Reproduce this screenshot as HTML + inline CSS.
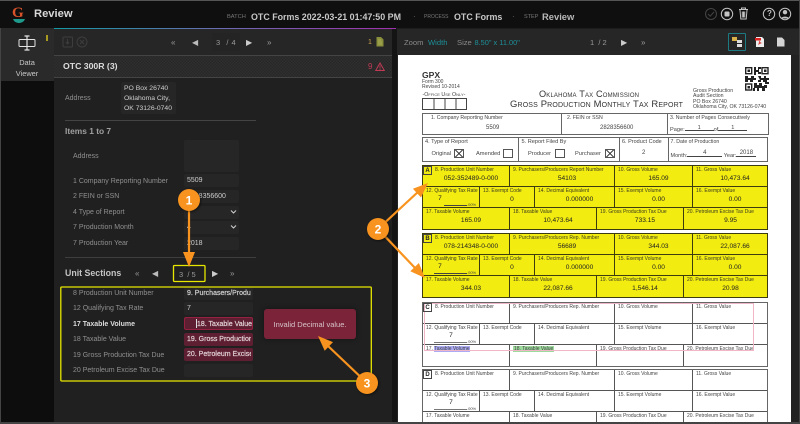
<!DOCTYPE html>
<html><head><meta charset="utf-8"><style>
*{box-sizing:border-box}
html,body{margin:0;padding:0;background:#1c1c1c}
#p{position:relative;width:800px;height:424px;overflow:hidden;background:#1c1c1c;font-family:"Liberation Sans",sans-serif;filter:blur(.3px)}
.a{position:absolute;white-space:nowrap}
.l{position:absolute;white-space:nowrap;font-size:7px;color:#8f8f8f;left:73px;line-height:10px;margin-top:1px}
.i{position:absolute;left:184px;width:55px;height:13px;background:#262626;border-radius:2px;color:#ccc;font-size:7px;line-height:14px;padding-left:3px;overflow:hidden;white-space:nowrap}
.u{width:69px}
.n{display:block;width:64px;overflow:hidden;font-size:7px;-webkit-text-stroke:.2px currentColor}
.e{background:#5e1f33;color:#e0d0d4}
.nav{position:absolute;color:#999;font-size:8px;line-height:10px;white-space:nowrap}
.s{position:absolute;left:422px;width:346px;border:1px solid #444;color:#222}
.y{background:#f2ec10;border-color:#3c3c10}
.r{display:flex;height:21px;border-bottom:.7px solid #555}
.y .r{border-color:#3c3c10}
.r:last-child{border-bottom:0}
.c{position:relative;border-right:.7px solid #555;font-size:5px;line-height:6px;color:#444;padding:1.500px 0 0 3px;white-space:nowrap;height:100%}
.y .c{border-color:#3c3c10;color:#3a3a20}
.c:last-child{border-right:0}
.c b{position:absolute;left:0;right:0;top:9px;text-align:center;font-weight:normal;font-size:6.600px;line-height:8px;color:#222;padding-left:10px}
.k{position:absolute;left:0;top:0;width:9px;height:9px;border:.7px solid #444;font-size:6px;font-weight:bold;line-height:8px;text-align:center;color:#222;background:transparent;z-index:2}
.q{position:absolute;font-size:5.200px;line-height:6px;color:#444;white-space:nowrap}
.t{position:absolute;border:.8px solid #555;width:9.500px;height:9.500px}
.x{background:linear-gradient(45deg,transparent 46%,#444 46%,#444 54%,transparent 54%),linear-gradient(-45deg,transparent 46%,#444 46%,#444 54%,transparent 54%)}
.sc{font-variant:small-caps;font-size:9.450px;color:#333;position:absolute;white-space:nowrap;letter-spacing:.15px;font-weight:normal;line-height:11px}
</style></head><body><div id="p">

<!-- frame backgrounds -->
<div class="a" style="left:0;top:0;width:800px;height:28px;background:#0f0f0f;border-top:1px solid #555"></div>
<div class="a" style="left:54px;top:28px;width:342px;height:1px;background:linear-gradient(90deg,#139aa5,#6c6ab0,#a030b0)"></div>
<div class="a" style="left:0;top:28px;width:54px;height:396px;background:#0d0d0d;border-left:1px solid #444"></div>
<div class="a" style="left:1px;top:28px;width:53px;height:53px;background:#2a2a2a"></div>
<div class="a" style="left:54px;top:29px;width:338px;height:395px;background:#202020"></div>
<div class="a" style="left:54px;top:29px;width:338px;height:26px;background:#262626"></div>
<div class="a" style="left:54px;top:55px;width:338px;height:23px;background:repeating-conic-gradient(#2f2f2f 0 25%,#272727 0 50%) 0 0/3px 3px;border-top:1px solid #444;border-bottom:1px solid #444"></div>
<div class="a" style="left:392px;top:29px;width:5px;height:395px;background:#141414"></div>
<div class="a" style="left:397px;top:29px;width:403px;height:26px;background:#262626"></div>
<div class="a" style="left:397px;top:55px;width:403px;height:369px;background:#222"></div>
<div class="a" style="left:398px;top:55px;width:393px;height:367px;background:#fff"></div>
<div class="a" style="left:799px;top:0;width:1px;height:424px;background:#444"></div>

<!-- logo + header -->
<div class="a" style="left:12px;top:6px;font:bold 15px 'Liberation Serif',serif;line-height:15px;color:#d8532a">G</div>
<svg class="a" style="left:12px;top:19px" width="15" height="5"><path d="M1 0h12c-1 3-4 4-6 4S2 3 1 0z" fill="#1d9a8c"/></svg>
<div class="a" style="left:34px;top:7px;font-size:11.200px;font-weight:bold;color:#d8d8d8;line-height:15px">Review</div>
<div class="a" style="left:227px;top:14px;font-size:5.700px;color:#777;line-height:7px">BATCH</div>
<div class="a" style="left:251px;top:11px;font-size:8.900px;font-weight:bold;color:#c8c8c8;line-height:12px">OTC Forms 2022-03-21 01:47:50 PM</div>
<div class="a" style="left:413px;top:12px;font-size:8px;color:#666;line-height:10px">·</div>
<div class="a" style="left:424px;top:14px;font-size:5px;color:#777;line-height:7px">PROCESS</div>
<div class="a" style="left:454px;top:11px;font-size:8.900px;font-weight:bold;color:#c8c8c8;line-height:12px">OTC Forms</div>
<div class="a" style="left:512px;top:12px;font-size:8px;color:#666;line-height:10px">·</div>
<div class="a" style="left:524px;top:14px;font-size:5.500px;color:#777;line-height:7px">STEP</div>
<div class="a" style="left:542px;top:11px;font-size:9.400px;font-weight:bold;color:#b8b8b8;line-height:12px">Review</div>

<svg class="a" style="left:700px;top:-1px" width="100" height="30" fill="none" stroke="#c4c4c4" stroke-width="1">
<circle cx="11" cy="15" r="5.500" stroke="#444"/><path d="M8 15l2.200 2.200L14 13" stroke="#444"/>
<circle cx="27" cy="15" r="5.700"/><rect x="24.500" y="12.500" width="5" height="5" fill="#c4c4c4" stroke="none" rx="1"/>
<path d="M39 10.500h9M41.500 10.500V9h4v1.500M40 11l.8 9h5.400l.8-9M42.300 12.500v6M43.500 12.500v6M44.700 12.500v6"/>
<circle cx="69" cy="15" r="5.700"/><circle cx="85" cy="15" r="5.700"/>
<circle cx="85" cy="13.200" r="2.200" fill="#c4c4c4" stroke="none"/><path d="M81 19.500c.8-2.500 7.200-2.500 8 0" fill="#c4c4c4" stroke="none"/>
</svg>
<div class="a" style="left:767px;top:9px;font-size:8px;font-weight:bold;color:#c4c4c4;line-height:10px">?</div>

<!-- rail -->
<svg class="a" style="left:17px;top:35px" width="21" height="17" fill="none" stroke="#e4e4e4" stroke-width="1"><rect x="2" y="4.500" width="16" height="7" rx="1"/><path d="M10 1v14M7.500 1h5M7.500 15h5" stroke-width="1.200"/></svg>
<div class="a" style="left:46px;top:35px;width:1.500px;height:6px;background:#a89a20"></div>
<div class="a" style="left:1px;top:56.500px;width:52px;text-align:center;font-size:7.400px;color:#c8c8c8;line-height:11px;white-space:normal">Data<br>Viewer</div>

<!-- left toolbar -->
<svg class="a" style="left:60px;top:34px" width="30" height="16" fill="none" stroke="#3d3d3d"><rect x="3" y="3" width="9.500" height="10" rx="1"/><path d="M7.500 5v5M5.800 8l1.700 2 1.700-2"/><circle cx="22" cy="8" r="5"/><path d="M20 6l4 4M24 6l-4 4"/></svg>
<div class="nav" style="left:171px;top:38px">«</div>
<div class="nav" style="left:192px;top:38px;color:#bbb">◀</div>
<div class="a" style="left:212px;top:33px;width:28px;height:18px;background:#242424"></div>
<div class="nav" style="left:216px;top:38px;font-size:7.500px;word-spacing:1px">3 &nbsp;/ 4</div>
<div class="nav" style="left:246px;top:38px;color:#ccc">▶</div>
<div class="nav" style="left:267px;top:38px">»</div>
<div class="a" style="left:368px;top:38px;font-size:7px;color:#c8a050;line-height:10px">1</div>
<svg class="a" style="left:376px;top:37px" width="8" height="10"><path d="M.5 0h4.500L7.500 2.500V9.500H.5z" fill="#8a8f3c"/><path d="M2 3h3M2 5h4M2 7h4" stroke="#c8cc70" stroke-width=".6"/></svg>

<!-- section heading -->
<div class="a" style="left:63px;top:61px;font-size:8.700px;font-weight:bold;color:#ddd;line-height:11px">OTC 300R (3)</div>
<div class="a" style="left:368px;top:62px;font-size:8px;color:#c03a55;line-height:10px">9</div>
<svg class="a" style="left:375px;top:62px" width="10" height="10" fill="none" stroke="#c03a55"><path d="M5 1L9.300 8.500H.7z"/><path d="M5 3.500v3M5 7v1" stroke-width=".8"/></svg>

<!-- address -->
<div class="l" style="left:65px;top:93px">Address</div>
<div class="a" style="left:121px;top:82px;width:55px;height:32px;background:#262626;border-radius:2px;color:#cfcfcf;font-size:6.800px;line-height:10px;padding:2px 3px 0">PO Box 26740<br>Oklahoma City,<br>OK 73126-0740</div>
<div class="a" style="left:65px;top:120px;width:191px;height:1px;background:#444"></div>
<div class="a" style="left:65px;top:125px;font-size:8.400px;font-weight:bold;color:#a0a0a0;line-height:12px">Items 1 to 7</div>

<div class="l" style="top:151px">Address</div><div class="i" style="top:140px;height:32px"></div>
<div class="l" style="top:176px">1 Company Reporting Number</div><div class="i" style="top:174px">5509</div>
<div class="l" style="top:191px">2 FEIN or SSN</div><div class="i" style="top:190px">2828356600</div>
<div class="l" style="top:207px">4 Type of Report</div><div class="i" style="top:206px"></div>
<div class="l" style="top:222px">7 Production Month</div><div class="i" style="top:221px">4</div>
<div class="l" style="top:238px">7 Production Year</div><div class="i" style="top:237px">2018</div>
<svg class="a" style="left:230px;top:209px" width="8" height="24" fill="none" stroke="#ccc" stroke-width="1.100"><path d="M1 1.500l2.500 2.500L6 1.500M1 16.500L3.500 19 6 16.500"/></svg>
<div class="a" style="left:65px;top:257px;width:191px;height:1px;background:#3e3e3e"></div>

<div class="a" style="left:65px;top:267px;font-size:8.800px;font-weight:bold;color:#c4c4c4;line-height:12px">Unit Sections</div>
<div class="nav" style="left:135px;top:269px">«</div>
<div class="nav" style="left:152px;top:269px;color:#bbb">◀</div>
<div class="nav" style="left:179px;top:270px;font-size:7.500px">3 &nbsp;/ 5</div>
<div class="nav" style="left:212px;top:269px;color:#ccc">▶</div>
<div class="nav" style="left:230px;top:269px">»</div>

<div class="l" style="top:288px">8 Production Unit Number</div><div class="i u" style="top:287px;color:#cfcfcf"><span class="n">9. Purchasers/Produ</span></div>
<div class="l" style="top:303px">12 Qualifying Tax Rate</div><div class="i u" style="top:302px">7</div>
<div class="l" style="top:319px;color:#ddd;font-weight:bold">17 Taxable Volume</div><div class="i u e" style="top:317px;border:1px solid #96203f;line-height:13px;padding-left:12px"><span class="n" style="width:56px">18. Taxable Value</span></div>
<div class="a" style="left:196px;top:319px;width:.7px;height:9px;background:#ddd"></div>
<div class="l" style="top:334px">18 Taxable Value</div><div class="i u e" style="top:333px"><span class="n">19. Gross Production</span></div>
<div class="l" style="top:350px">19 Gross Production Tax Due</div><div class="i u e" style="top:348px"><span class="n">20. Petroleum Excise</span></div>
<div class="l" style="top:365px">20 Petroleum Excise Tax Due</div><div class="i u" style="top:364px"></div>

<div class="a" style="left:264px;top:309px;width:92px;height:30px;background:#7a2339;border-radius:3px;color:#d8c4ca;font-size:7.500px;line-height:31px;text-align:center;box-shadow:0 0 6px rgba(0,0,0,.4)">Invalid Decimal value.</div>

<!-- right toolbar -->
<div class="a" style="left:404px;top:38px;font-size:7.600px;color:#8a8a8a;line-height:10px">Zoom</div>
<div class="a" style="left:428px;top:38px;font-size:7.600px;color:#1d8f98;line-height:10px">Width</div>
<div class="a" style="left:457px;top:38px;font-size:7.600px;color:#8a8a8a;line-height:10px">Size</div>
<div class="a" style="left:474.500px;top:38px;font-size:7.400px;color:#1d8f98;line-height:10px">8.50" x 11.00"</div>
<div class="nav" style="left:590px;top:38px;font-size:7.500px">1 &nbsp;/ 2</div>
<div class="nav" style="left:621px;top:38px;color:#ccc">▶</div>
<div class="nav" style="left:641px;top:38px">»</div>
<div class="a" style="left:728px;top:33px;width:18px;height:18px;border:1px solid #1b7a82;border-radius:1px"></div>
<svg class="a" style="left:732px;top:37px" width="11" height="11"><rect x="0" y="0" width="5" height="4" fill="#d8b04a"/><rect x="5" y="3" width="5" height="3" fill="#ddd"/><rect x="5" y="7" width="5" height="3" fill="#ddd"/></svg>
<svg class="a" style="left:755px;top:37px" width="10" height="10"><path d="M1 0h6l2 2v8H1z" fill="#eee"/><rect x="0" y="1" width="6" height="2.500" fill="#d22"/><path d="M3 8c1-2 1-3 1-5 1 2 2 3 4 3-2 0-3 1-5 2z" fill="#d44"/></svg>
<svg class="a" style="left:777px;top:37px" width="8" height="10"><path d="M0 .5h5l2.500 2.500V9.500H0z" fill="#d4d4d4"/></svg>

<!-- doc header -->
<div class="a" style="left:422px;top:71px;font-size:8.600px;font-weight:bold;color:#333;line-height:9px">GPX</div>
<div class="q" style="left:422px;top:80px;font-size:5px;line-height:4.700px">Form 300<br>Revised 10-2014</div>
<div class="q" style="left:422.500px;top:92px;font-size:5.300px;font-variant:small-caps">-Office Use Only-</div>
<div class="a" style="left:422px;top:98px;width:45px;height:12px;border:.8px solid #444;background:linear-gradient(90deg,transparent 10.500px,#444 10.500px,#444 11.300px,transparent 11.300px,transparent 21.500px,#444 21.500px,#444 22.300px,transparent 22.300px,transparent 32.500px,#444 32.500px,#444 33.300px,transparent 33.300px)"></div>
<div class="sc" style="left:539px;top:88.500px;font-size:9.200px">Oklahoma Tax Commission</div>
<div class="sc" style="left:510px;top:99px">Gross Production Monthly Tax Report</div>
<div class="q" style="left:693px;top:88.500px;font-size:5.200px;line-height:5.500px">Gross Production<br>Audit Section<br>PO Box 26740<br>Oklahoma City, OK 73126-0740</div>
<svg class="a" style="left:745px;top:67px" width="24" height="24"><g fill="none" stroke="#222" stroke-width="1.400"><rect x=".7" y=".7" width="6" height="6"/><rect x="17" y=".7" width="6" height="6"/><rect x=".7" y="17" width="6" height="6"/></g><g fill="#222"><rect x="2.500" y="2.500" width="2.500" height="2.500"/><rect x="19" y="2.500" width="2.500" height="2.500"/><rect x="2.500" y="19" width="2.500" height="2.500"/><path d="M9 0h2v3h2V0h3v2h-2v3h2v2h-3V5h-2v3H9zM0 9h3v2h3V9h3v2h2v2H8v2H5v-2H3v2H0zM13 9h3v2h3V9h2v2h3v2h-2v2h2v2h-4v-2h-2v-2h-2v2h-3v-2h2zM9 16h3v2h2v-2h3v3h2v-1h3v3h-2v3h-3v-3h-3v3h-2v-3H9zM8 21h2v3H8z"/></g></svg>

<!-- top form rows -->
<div class="a" style="left:422px;top:113px;width:347px;height:22px;border:.9px solid #666"></div>
<div class="a" style="left:561px;top:113px;width:.8px;height:22px;background:#666"></div>
<div class="a" style="left:667px;top:113px;width:.8px;height:22px;background:#666"></div>
<div class="q" style="left:431px;top:114.500px">1. Company Reporting Number</div>
<div class="q" style="left:567px;top:114.500px">2. FEIN or SSN</div>
<div class="q" style="left:670px;top:114.500px">3. Number of Pages Consecutively</div>
<div class="q" style="left:486px;top:124px;font-size:6px;line-height:8px">5509</div>
<div class="q" style="left:600px;top:124px;font-size:6px;line-height:8px">2828356600</div>
<div class="q" style="left:670px;top:126.500px;font-size:5.600px">Page:<span style="display:inline-block;width:29px;border-bottom:.6px solid #444;text-align:center;height:6px;position:relative;top:-1.500px">1</span>of<span style="display:inline-block;width:29px;border-bottom:.6px solid #444;text-align:center;height:6px;position:relative;top:-1.500px">1</span></div>

<div class="a" style="left:422px;top:137px;width:346px;height:25px;border:.9px solid #666"></div>
<div class="a" style="left:518px;top:137px;width:.8px;height:25px;background:#666"></div>
<div class="a" style="left:619px;top:137px;width:.8px;height:25px;background:#666"></div>
<div class="a" style="left:668px;top:137px;width:.8px;height:25px;background:#666"></div>
<div class="q" style="left:425px;top:139px;font-size:5.600px">4. Type of Report</div>
<div class="q" style="left:521.500px;top:139px;font-size:5.600px">5. Report Filed By</div>
<div class="q" style="left:622px;top:139px;font-size:5.500px">6. Product Code</div>
<div class="q" style="left:670.500px;top:139px">7. Date of Production</div>
<div class="q" style="left:431.500px;top:150.500px;font-size:5.700px">Original</div>
<div class="t x" style="left:454px;top:148.500px"></div>
<div class="q" style="left:476px;top:150.500px;font-size:5.700px">Amended</div><div class="t" style="left:503px;top:148.500px"></div>
<div class="q" style="left:528px;top:150.500px;font-size:5.700px">Producer</div><div class="t" style="left:555px;top:148.500px"></div>
<div class="q" style="left:575px;top:150.500px;font-size:5.700px">Purchaser</div>
<div class="t x" style="left:605px;top:148.500px"></div>
<div class="q" style="left:642px;top:148.500px;font-size:6px;line-height:8px">2</div>
<div class="q" style="left:670.500px;top:152.500px;font-size:5.500px">Month:<span style="display:inline-block;width:35px;border-bottom:.6px solid #444;text-align:center;height:7px;position:relative;top:-3px;font-size:6px">4</span> Year:<span style="display:inline-block;width:20px;border-bottom:.6px solid #444;text-align:center;height:7px;position:relative;top:-3px;font-size:6px">2018</span></div>

<!-- Section A -->
<div class="s y" style="top:164.500px;height:65px"><div class="k">A</div>
<div class="r"><div class="c" style="width:87px;padding-left:12px">8. Production Unit Number<b>052-352489-0-000</b></div><div class="c" style="width:105px">9. Purchasers/Producers Report Number<b>54103</b></div><div class="c" style="width:78px">10. Gross Volume<b>165.09</b></div><div class="c" style="flex:1">11. Gross Value<b>10,473.64</b></div></div>
<div class="r"><div class="c" style="width:57px">12. Qualifying Tax Rate<b style="padding:0 22px 0 0;width:100%;top:8px">7</b><span class="q" style="left:44px;top:15px;font-size:4px">.00%</span><span class="a" style="left:21px;top:18.500px;width:23px;height:.6px;background:#444"></span></div><div class="c" style="width:55px">13. Exempt Code<b>0</b></div><div class="c" style="width:80px">14. Decimal Equivalent<b>0.000000</b></div><div class="c" style="width:78px">15. Exempt Volume<b>0.00</b></div><div class="c" style="flex:1">16. Exempt Value<b>0.00</b></div></div>
<div class="r"><div class="c" style="width:87px">17. Taxable Volume<b>165.09</b></div><div class="c" style="width:87px">18. Taxable Value<b>10,473.64</b></div><div class="c" style="width:87px">19. Gross Production Tax Due<b>733.15</b></div><div class="c" style="flex:1">20. Petroleum Excise Tax Due<b>9.95</b></div></div></div>

<!-- Section B -->
<div class="s y" style="top:232.500px;height:65px"><div class="k">B</div>
<div class="r"><div class="c" style="width:87px;padding-left:12px">8. Production Unit Number<b>078-214348-0-000</b></div><div class="c" style="width:105px">9. Purchasers/Producers Rep. Number<b>56689</b></div><div class="c" style="width:78px">10. Gross Volume<b>344.03</b></div><div class="c" style="flex:1">11. Gross Value<b>22,087.66</b></div></div>
<div class="r"><div class="c" style="width:57px">12. Qualifying Tax Rate<b style="padding:0 22px 0 0;width:100%;top:8px">7</b><span class="q" style="left:44px;top:15px;font-size:4px">.00%</span><span class="a" style="left:11px;top:18.500px;width:33px;height:.6px;background:#444"></span></div><div class="c" style="width:55px">13. Exempt Code<b>0</b></div><div class="c" style="width:80px">14. Decimal Equivalent<b>0.000000</b></div><div class="c" style="width:78px">15. Exempt Volume<b>0.00</b></div><div class="c" style="flex:1">16. Exempt Value<b>0.00</b></div></div>
<div class="r"><div class="c" style="width:87px">17. Taxable Volume<b>344.03</b></div><div class="c" style="width:87px">18. Taxable Value<b>22,087.66</b></div><div class="c" style="width:87px">19. Gross Production Tax Due<b>1,546.14</b></div><div class="c" style="flex:1">20. Petroleum Excise Tax Due<b>20.98</b></div></div></div>

<!-- Section C -->
<div class="s" style="top:301.500px;height:65px;border-color:#666"><div class="k">C</div>
<div class="r"><div class="c" style="width:87px;padding-left:12px">8. Production Unit Number</div><div class="c" style="width:105px">9. Purchasers/Producers Rep. Number</div><div class="c" style="width:78px">10. Gross Volume</div><div class="c" style="flex:1">11. Gross Value</div></div>
<div class="r"><div class="c" style="width:57px">12. Qualifying Tax Rate<b style="padding:0;width:100%;top:8px">7</b><span class="q" style="left:44px;top:15px;font-size:4px">.00%</span><span class="a" style="left:11px;top:18.500px;width:33px;height:.6px;background:#777"></span></div><div class="c" style="width:55px">13. Exempt Code</div><div class="c" style="width:80px">14. Decimal Equivalent</div><div class="c" style="width:78px">15. Exempt Volume</div><div class="c" style="flex:1">16. Exempt Value</div></div>
<div class="r"><div class="c" style="width:87px">17. <span style="background:#aaaaf5">Taxable Volume</span></div><div class="c" style="width:87px"><span style="background:#9ddb9d;padding:0 1px">18. Taxable Value</span></div><div class="c" style="width:87px">19. Gross Production Tax Due</div><div class="c" style="flex:1">20. Petroleum Excise Tax Due</div></div></div>
<div class="a" style="left:424px;top:303px;width:330px;height:48px;border:1px solid #efb6c8"></div>

<!-- Section D -->
<div class="s" style="top:368.500px;height:65px;border-color:#666"><div class="k">D</div>
<div class="r"><div class="c" style="width:87px;padding-left:12px">8. Production Unit Number</div><div class="c" style="width:105px">9. Purchasers/Producers Rep. Number</div><div class="c" style="width:78px">10. Gross Volume</div><div class="c" style="flex:1">11. Gross Value</div></div>
<div class="r"><div class="c" style="width:57px">12. Qualifying Tax Rate<b style="padding:0;width:100%;top:8px">7</b><span class="q" style="left:44px;top:15px;font-size:4px">.00%</span><span class="a" style="left:11px;top:18.500px;width:33px;height:.6px;background:#777"></span></div><div class="c" style="width:55px">13. Exempt Code</div><div class="c" style="width:80px">14. Decimal Equivalent</div><div class="c" style="width:78px">15. Exempt Volume</div><div class="c" style="flex:1">16. Exempt Value</div></div>
<div class="r"><div class="c" style="width:87px">17. Taxable Volume</div><div class="c" style="width:87px">18. Taxable Value</div><div class="c" style="width:87px">19. Gross Production Tax Due</div><div class="c" style="flex:1">20. Petroleum Excise Tax Due</div></div></div>
<div class="a" style="left:0;top:422px;width:800px;height:2px;background:#444"></div>

<!-- annotations -->
<svg class="a" style="left:0;top:0" width="800" height="424" font-family="Liberation Sans, sans-serif">
<rect x="173.500" y="265.500" width="31.500" height="16" fill="none" stroke="#e6e600" stroke-width="1.300" rx="1"/>
<rect x="60.800" y="287" width="310.500" height="94" fill="none" stroke="#e6e600" stroke-width="1.300" rx="1"/>
<g stroke="#f7931e" stroke-width="2.200" fill="#f7931e">
<line x1="189" y1="208" x2="189" y2="254"/><polygon points="189,267 183,252 195,252" stroke="none"/>
<line x1="378" y1="229" x2="419" y2="191"/><polygon points="428,183 421,197.500 412.900,188.700" stroke="none"/>
<line x1="378" y1="229" x2="416" y2="269"/><polygon points="425,278 418.900,263 410.300,271.300" stroke="none"/>
<line x1="367" y1="383" x2="327" y2="345"/><polygon points="318,336 333,342.100 324.700,350.700" stroke="none"/>
</g>
<g fill="#f7931e" style="filter:drop-shadow(1px 1px 1px rgba(0,0,0,.5))"><circle cx="189" cy="200" r="11"/><circle cx="378" cy="229" r="11"/><circle cx="367" cy="383" r="11"/></g>
<g fill="#fff" font-size="12" font-weight="bold" text-anchor="middle"><text x="189" y="204.500">1</text><text x="378" y="233.500">2</text><text x="367" y="387.500">3</text></g>
</svg>
</div></body></html>
